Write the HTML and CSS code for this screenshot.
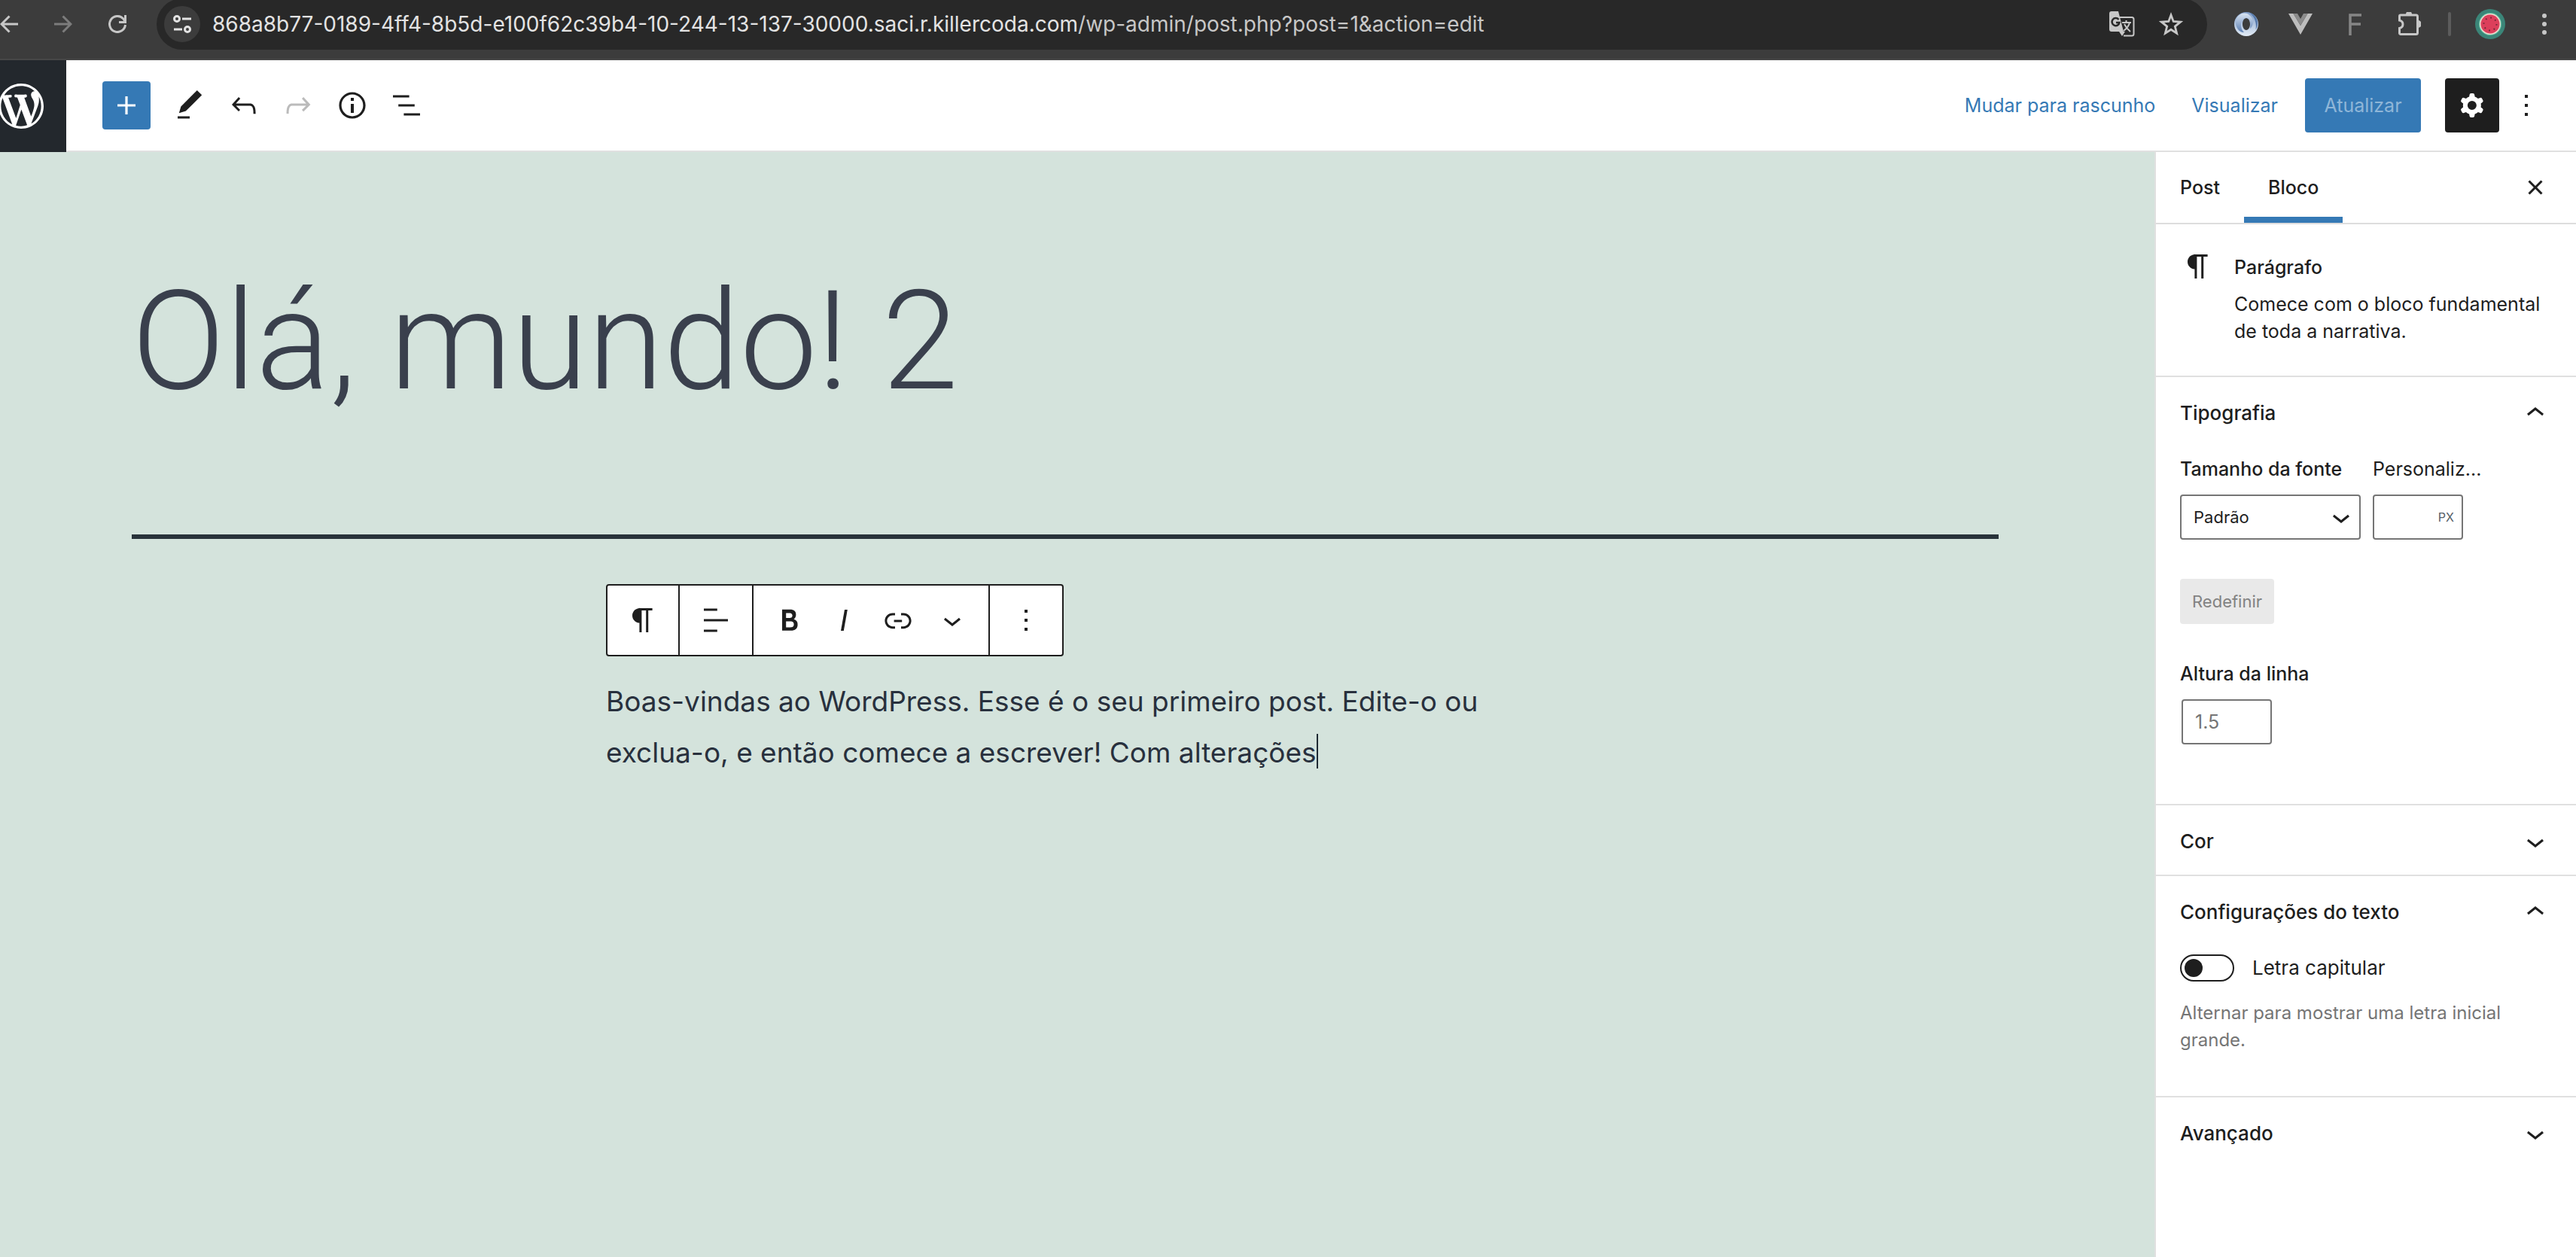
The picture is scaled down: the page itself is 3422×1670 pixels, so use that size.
FILE: index.html
```html
<!DOCTYPE html>
<html lang="pt-BR">
<head>
<meta charset="utf-8">
<title>Editar post</title>
<link rel="stylesheet" href="styles.css">
</head>
<body>
<header class="browser">
  <nav class="browser-nav" aria-label="Navegador">
    <button class="plain" aria-label="Voltar"><svg width="24" height="24" viewBox="0 0 24 24"><path d="M24 12H2M12.500 1.500 2 12l10.500 10.500" fill="none" stroke="#c7c7c7" stroke-width="3"/></svg></button>
    <button class="plain" aria-label="Avançar"><svg width="24" height="24" viewBox="0 0 24 24"><path d="M0 12h22M11.500 1.500 22 12 11.500 22.500" fill="none" stroke="#7c7c7c" stroke-width="3"/></svg></button>
    <button class="plain" aria-label="Recarregar"><svg width="24" height="24" viewBox="0 0 24 24"><path d="M22.500 13A10.500 10.500 0 1 1 19.600 4.700L22 8" fill="none" stroke="#c7c7c7" stroke-width="3"/><path d="M24 0v11H14V8h7V0z" fill="#c7c7c7"/></svg></button>
  </nav>
  <div class="address">
    <button class="plain site-info" aria-label="Informações do site"><svg width="24" height="24" viewBox="0 0 24 24" fill="none" stroke="#e3e3e3" stroke-width="3"><circle cx="5" cy="5" r="3.500"/><path d="M12 5h12M1 19h11"/><circle cx="19" cy="19" r="3.500"/></svg></button>
    <span class="url"><span class="url-host">868a8b77-0189-4ff4-8b5d-e100f62c39b4-10-244-13-137-30000.saci.r.killercoda.com</span>/wp-admin/post.php?post=1&amp;action=edit</span>
    <button class="plain" aria-label="Traduzir"><svg width="34" height="34" viewBox="0 0 34 34"><path d="M14 8h16a2.500 2.500 0 0 1 2.500 2.500V30a2.500 2.500 0 0 1-2.500 2.500H19" fill="none" stroke="#c7c7c7" stroke-width="2"/><path d="M3 0h9l7 27H3a3 3 0 0 1-3-3V3a3 3 0 0 1 3-3zM13 27h8l-4 6z" fill="#c7c7c7"/><path d="M12.500 11A5 5 0 1 0 13.500 15H9" fill="none" stroke="#282828" stroke-width="2.500"/><path d="M17 15h12M22.500 12v3M27 15c-1 5-4 8-8 11M20 17c2 4 4 7 8 10" fill="none" stroke="#c7c7c7" stroke-width="2"/></svg></button>
    <button class="plain" aria-label="Favoritar"><svg width="32" height="32" viewBox="0 0 32 32"><path d="M16 4l3.200 8.500 9.300.7-7.200 5.900 2.300 9L16 23.200l-7.600 4.900 2.300-9L3.500 13.200l9.300-.7z" fill="none" stroke="#c7c7c7" stroke-width="2.800"/></svg></button>
  </div>
  <div class="extensions">
    <button class="plain" aria-label="Extensão O"><svg width="32" height="32" viewBox="0 0 32 32"><defs><linearGradient id="ring" x1="0" y1="0" x2="0" y2="1"><stop offset="0" stop-color="#d9e4f2"/><stop offset="1" stop-color="#5c80b4"/></linearGradient><linearGradient id="ring-low" x1="0" y1="0" x2="0" y2="1"><stop offset="0" stop-color="#7f9dc8"/><stop offset="1" stop-color="#e3ecf6"/></linearGradient></defs><path fill-rule="evenodd" fill="url(#ring-low)" d="M16 0a16 16 0 1 0 0 32 16 16 0 1 0 0-32zM16 8c3 0 5 4 5 8s-2 8-5 8-5-4-5-8 2-8 5-8z"/><path fill="url(#ring)" d="M2 11C5 2 14-1 20 4c6 4 7 13 1 18 1-8 0-14-5-14-4 0-7 4-7 9 0 4 1 7 4 10C5 27 1 18 2 11z"/><path fill="#5578aa" d="M20 0.500c10 3 14 14 8.500 23C30 14 27 6 20 .5z"/></svg></button>
    <button class="plain" aria-label="Extensão V"><svg width="32" height="32" viewBox="0 0 32 32"><path d="M0 2h6.500L16 18l9.500-16H32L16 30z" fill="#bdbdbd"/><path d="M6.500 2H12l4 7 4-7h5.500L16 18z" fill="#8b8b8b"/></svg></button>
    <button class="plain" aria-label="Extensão F"><svg width="32" height="32" viewBox="0 0 32 32"><path d="M10 31V4h15M10 16h14" fill="none" stroke="#858585" stroke-width="3.500"/></svg></button>
    <button class="plain" aria-label="Extensões"><svg width="32" height="32" viewBox="0 0 32 32"><path d="M5 4h20.500a2 2 0 0 1 2 2v21.500a2 2 0 0 1-2 2H5a1.500 1.500 0 0 1-1.500-1.500v-6.500c6-1.500 6-9 0-10.500V5.500A1.500 1.500 0 0 1 5 4z" fill="none" stroke="#c7c7c7" stroke-width="3"/><path d="M12 3a4 4 0 0 1 8 0zM28 11a4.500 4.500 0 0 1 0 10z" fill="#c7c7c7"/></svg></button>
  </div>
  <span class="separator"></span>
  <button class="plain" aria-label="Perfil"><svg width="40" height="40" viewBox="0 0 40 40"><circle cx="20" cy="20" r="20" fill="#3b8578"/><circle cx="20" cy="20" r="15" fill="#5fc5a4"/><circle cx="20" cy="20" r="14" fill="#f1d6cc"/><circle cx="20" cy="20" r="12.500" fill="#dc3f5b"/><circle cx="20" cy="20" r="8.500" fill="none" stroke="#6e2836" stroke-width="2" stroke-dasharray="1.700 4.976"/></svg></button>
  <button class="plain browser-menu" aria-label="Menu"><svg width="32" height="32" viewBox="0 0 32 32" fill="#c7c7c7"><circle cx="16" cy="5" r="3"/><circle cx="16" cy="16" r="3"/><circle cx="16" cy="27" r="3"/></svg></button>
</header>

<header class="editor-header">
  <a class="wp-home" href="#" aria-label="Ver posts"><svg class="wp-logo" viewBox="0 0 20 20"><path fill="#fff" d="M20 10c0-5.510-4.490-10-10-10C4.480 0 0 4.490 0 10c0 5.520 4.480 10 10 10 5.510 0 10-4.480 10-10zM7.780 15.370L4.370 6.220c.55-.02 1.170-.08 1.170-.08.5-.06.44-1.130-.06-1.110 0 0-1.450.11-2.370.11-.18 0-.37 0-.58-.01C4.120 2.690 6.870 1.110 10 1.110c2.330 0 4.450.87 6.050 2.340-.68-.11-1.650.39-1.650 1.580 0 .74.45 1.360.9 2.100.35.61.55 1.360.55 2.460 0 1.490-1.400 5-1.400 5l-3.030-8.370c.54-.02.82-.17.82-.17.5-.05.44-1.250-.06-1.220 0 0-1.440.12-2.380.12-.87 0-2.330-.12-2.330-.12-.5-.03-.56 1.200-.06 1.220l.92.080 1.260 3.410zM17.410 10c.24-.64.74-1.870.43-4.250.7 1.290 1.050 2.710 1.050 4.250 0 3.290-1.730 6.240-4.400 7.780.97-2.590 1.940-5.200 2.920-7.780zM6.100 18.090C3.120 16.650 1.110 13.530 1.110 10c0-1.300.23-2.480.72-3.590C3.250 10.300 4.670 14.200 6.100 18.090zm4.030-6.630l2.580 6.980c-.86.29-1.760.45-2.710.45-.79 0-1.570-.11-2.290-.33.81-2.380 1.620-4.740 2.420-7.100z"/></svg></a>
  <div class="tools">
    <button class="tool-add" aria-label="Adicionar bloco"><svg class="icon" viewBox="0 0 24 24"><path d="M18 11.200h-5.200V6h-1.600v5.200H6v1.600h5.200V18h1.600v-5.200H18z"/></svg></button>
    <button class="tool" aria-label="Ferramentas"><svg class="icon" viewBox="0 0 24 24"><path d="M20.100 5.100L16.900 2 6.200 12.700l-1.300 4.400 4.500-1.300L20.100 5.100zM4 20.800h8v-1.500H4v1.500z"/></svg></button>
    <button class="tool" aria-label="Desfazer"><svg class="icon" viewBox="0 0 24 24"><path d="M18.300 11.700c-.6-.6-1.400-.9-2.300-.9H6.700l2.900-3.300-1.100-1-4.500 5L8.500 16l1-1-2.700-2.700H16c.5 0 .9.200 1.300.5 1 1 1 3.400 1 4.500v.3h1.500v-.2c0-1.500 0-4.300-1.500-5.700z"/></svg></button>
    <button class="tool" aria-label="Refazer" disabled><svg class="icon" viewBox="0 0 24 24"><path d="M15.600 6.500l-1.100 1 2.900 3.300H8c-.9 0-1.700.3-2.300.9-1.400 1.500-1.400 4.200-1.400 5.600v.2h1.500v-.3c0-1.100 0-3.500 1-4.500.3-.3.7-.5 1.300-.5h9.200L14.500 15l1.100 1.100 4.600-4.600-4.600-5z"/></svg></button>
    <button class="tool" aria-label="Detalhes"><svg class="icon" viewBox="0 0 24 24"><path d="M12 3.200c-4.800 0-8.800 3.900-8.800 8.800 0 4.800 3.900 8.800 8.800 8.800 4.800 0 8.800-3.900 8.800-8.800 0-4.800-4-8.800-8.800-8.800zm0 16c-4 0-7.200-3.300-7.200-7.200C4.800 8 8 4.800 12 4.800s7.200 3.300 7.200 7.200c0 4-3.200 7.200-7.200 7.200zM11 17h2v-6h-2v6zm0-8h2V7h-2v2z"/></svg></button>
    <button class="tool" aria-label="Visualização em lista"><svg class="icon" viewBox="0 0 24 24"><path d="M13.800 5.200H3v1.500h10.800V5.200zm-3.600 12v1.500H21v-1.500H10.200zm7.200-6H6.600v1.500h10.800v-1.500z"/></svg></button>
  </div>
  <div class="actions">
    <button class="link-action">Mudar para rascunho</button>
    <button class="link-action">Visualizar</button>
    <button class="update" disabled>Atualizar</button>
    <button class="settings" aria-label="Configurações"><svg class="icon" viewBox="0 0 24 24"><path fill-rule="evenodd" d="M10.289 4.836A1 1 0 0111.275 4h1.306a1 1 0 01.987.836l.244 1.466c.787.260 1.503.679 2.108 1.218l1.393-.522a1 1 0 011.216.437l.653 1.130a1 1 0 01-.230 1.273l-1.148.944a6.025 6.025 0 010 2.435l1.149.946a1 1 0 01.230 1.272l-.653 1.130a1 1 0 01-1.216.437l-1.394-.522c-.605.540-1.320.958-2.108 1.218l-.244 1.466a1 1 0 01-.987.836h-1.306a1 1 0 01-.986-.836l-.244-1.466a5.995 5.995 0 01-2.108-1.218l-1.394.522a1 1 0 01-1.217-.436l-.653-1.131a1 1 0 01.230-1.272l1.149-.946a6.026 6.026 0 010-2.435l-1.148-.944a1 1 0 01-.230-1.272l.653-1.131a1 1 0 011.217-.437l1.393.522a5.994 5.994 0 012.108-1.218l.244-1.466zM14.929 12a3 3 0 11-6 0 3 3 0 016 0z"/></svg></button>
    <button class="tool" aria-label="Opções"><svg class="icon" viewBox="0 0 24 24"><path d="M13 19h-2v-2h2v2zm0-6h-2v-2h2v2zm0-6h-2V5h2v2z"/></svg></button>
  </div>
</header>

<div class="workspace">
  <main class="canvas">
    <h1 class="post-title">Olá, mundo! 2</h1>
    <div class="post-body">
      <div class="block-toolbar" role="toolbar" aria-label="Ferramentas do bloco">
        <div class="group"><button class="tool" aria-label="Parágrafo"><svg class="icon" viewBox="0 0 24 24"><path d="M18.300 4H9.900v-.1l-.9.2c-2.300.4-4 2.400-4 4.800s1.700 4.400 4 4.800l.7.100V20h1.500V5.500h2.900V20h1.500V5.500h2.700V4z"/></svg></button></div>
        <div class="group"><button class="tool" aria-label="Alinhar"><svg class="icon" viewBox="0 0 24 24"><path d="M4 19.800h8.900v-1.500H4v1.500zm8.900-15.600H4v1.500h8.900V4.200zm-8.900 7v1.500h16v-1.500H4z"/></svg></button></div>
        <div class="group">
          <button class="tool" aria-label="Negrito"><svg class="icon" viewBox="0 0 24 24"><path d="M14.700 11.300c1-.6 1.500-1.600 1.500-3 0-2.300-1.300-3.400-4-3.400H7v14h5.800c1.400 0 2.500-.3 3.300-1 .8-.7 1.200-1.700 1.200-2.900.1-1.900-.8-3.100-2.600-3.700zm-5.100-4h2.300c.6 0 1.100.1 1.400.4.300.3.500.7.500 1.200s-.2 1-.5 1.200c-.3.3-.8.400-1.400.4H9.600V7.300zm4.600 9c-.4.300-1 .4-1.700.4H9.600v-3.900h2.900c.7 0 1.300.2 1.700.5.400.3.600.8.600 1.500s-.2 1.200-.6 1.500z"/></svg></button>
          <button class="tool" aria-label="Itálico"><svg class="icon" viewBox="0 0 24 24"><path d="M12.500 5L10 19h1.900l2.500-14z"/></svg></button>
          <button class="tool" aria-label="Link"><svg class="icon" viewBox="0 0 24 24"><path d="M15.600 7.200H14v1.500h1.600c2 0 3.700 1.700 3.700 3.700s-1.700 3.700-3.700 3.700H14v1.500h1.600c2.800 0 5.200-2.300 5.200-5.200 0-2.900-2.300-5.200-5.200-5.200zM4.700 12.400c0-2 1.700-3.700 3.700-3.700H10V7.200H8.400c-2.900 0-5.200 2.300-5.200 5.200 0 2.900 2.300 5.200 5.200 5.200H10v-1.500H8.400c-2 0-3.700-1.700-3.700-3.700zm4.600.9h5.300v-1.500H9.300v1.500z"/></svg></button>
          <button class="tool" aria-label="Mais"><svg class="icon" viewBox="0 0 24 24"><path d="M17.500 11.600L12 16l-5.500-4.400.9-1.200L12 14l4.500-3.600 1 1.200z"/></svg></button>
        </div>
        <div class="group"><button class="tool" aria-label="Opções do bloco"><svg class="icon" viewBox="0 0 24 24"><path d="M13 19h-2v-2h2v2zm0-6h-2v-2h2v2zm0-6h-2V5h2v2z"/></svg></button></div>
      </div>
      <p class="paragraph">Boas-vindas ao WordPress. Esse é o seu primeiro post. Edite-o ou exclua-o, e então comece a escrever! Com alterações<span class="caret"></span></p>
    </div>
  </main>

  <aside class="sidebar">
    <div class="tabs">
      <button class="tab">Post</button>
      <button class="tab tab-active">Bloco</button>
      <button class="plain close" aria-label="Fechar"><svg class="icon" viewBox="0 0 24 24"><path d="M12 13.060l3.712 3.713 1.061-1.060L13.061 12l3.712-3.712-1.060-1.060L12 10.938 8.288 7.227l-1.061 1.060L10.939 12l-3.712 3.712 1.060 1.061L12 13.061z"/></svg></button>
    </div>
    <section class="card">
      <svg class="icon" viewBox="0 0 24 24"><path d="M18.300 4H9.900v-.1l-.9.2c-2.300.4-4 2.400-4 4.800s1.700 4.400 4 4.800l.7.100V20h1.500V5.500h2.900V20h1.500V5.500h2.700V4z"/></svg>
      <div class="card-text">
        <h2 class="card-title">Parágrafo</h2>
        <p class="card-desc">Comece com o bloco fundamental de toda a narrativa.</p>
      </div>
    </section>
    <section class="panel">
      <button class="panel-toggle">Tipografia<svg class="icon" viewBox="0 0 24 24"><path d="M6.500 12.400L12 8l5.500 4.400-.9 1.200L12 10l-4.500 3.600-1-1.200z"/></svg></button>
      <div class="typography">
        <div class="font-row">
          <div class="field">
            <label class="label-strong" for="font-size">Tamanho da fonte</label>
            <div class="select-wrap">
              <select class="select" id="font-size"><option>Padrão</option></select>
              <svg class="icon select-arrow" viewBox="0 0 24 24"><path d="M17.500 11.600L12 16l-5.500-4.400.9-1.200L12 14l4.500-3.600 1 1.200z"/></svg>
            </div>
          </div>
          <div class="field">
            <label for="custom-size">Personaliz...</label>
            <div class="unit-box"><input class="unit-input" id="custom-size" type="text"><span class="unit">PX</span></div>
          </div>
        </div>
        <button class="reset" disabled>Redefinir</button>
        <div class="field">
          <label class="label-strong" for="line-height">Altura da linha</label>
          <input class="line-input" id="line-height" type="text" placeholder="1.5">
        </div>
      </div>
    </section>
    <section class="panel">
      <button class="panel-toggle">Cor<svg class="icon" viewBox="0 0 24 24"><path d="M17.500 11.600L12 16l-5.500-4.400.9-1.200L12 14l4.500-3.600 1 1.200z"/></svg></button>
    </section>
    <section class="panel">
      <button class="panel-toggle">Configurações do texto<svg class="icon" viewBox="0 0 24 24"><path d="M6.500 12.400L12 8l5.500 4.400-.9 1.200L12 10l-4.500 3.600-1-1.200z"/></svg></button>
      <div class="text-settings">
        <div class="switch-row"><input class="switch" id="drop-cap" type="checkbox"><label class="switch-label" for="drop-cap">Letra capitular</label></div>
        <p class="help">Alternar para mostrar uma letra inicial grande.</p>
      </div>
    </section>
    <section class="panel">
      <button class="panel-toggle">Avançado<svg class="icon" viewBox="0 0 24 24"><path d="M17.500 11.600L12 16l-5.500-4.400.9-1.200L12 14l4.500-3.600 1 1.200z"/></svg></button>
    </section>
  </aside>
</div>
</body>
</html>
```
FILE: styles.css
```css
* { box-sizing: border-box; }

body {
  margin: 0;
  min-height: 100vh;
  display: flex;
  flex-direction: column;
  background: #fff;
  color: #1e1e1e;
  font: 400 25px/36px Inter, "Liberation Sans", sans-serif;
}

button, input, select { font: inherit; color: inherit; }

button {
  display: flex;
  align-items: center;
  justify-content: center;
  padding: 0;
  border: 0;
  background: none;
}

h1, h2, p { margin: 0; }
svg { display: block; flex: none; }

.icon { width: 48px; height: 48px; fill: currentColor; }
.plain { flex: none; }

/* Browser bar */
.browser {
  display: flex;
  align-items: center;
  height: 80px;
  padding: 0 26px 14px 0;
  border-bottom: 2px solid #474747;
  background: #3c3c3c;
}
.browser-nav { display: flex; gap: 48px; margin-right: 40px; }
.address {
  display: flex;
  flex: 1;
  align-items: center;
  gap: 32px;
  height: 68px;
  min-width: 0;
  padding: 0 32px 0 10px;
  border-radius: 34px;
  background: #282828;
}
.site-info { width: 48px; height: 48px; border-radius: 50%; background: #3c3c3c; }
.url { flex: 1; margin-left: -16px; color: #c7c7c7; font-size: 28px; white-space: nowrap; }
.url-host { color: #e3e3e3; }
.extensions { display: flex; gap: 40px; margin-left: 36px; }
.separator { width: 4px; height: 32px; margin: 0 32px 0 36px; border-radius: 2px; background: #5c5c5c; }
.browser-menu { margin-left: 36px; }

/* Editor header */
.editor-header {
  display: flex;
  align-items: center;
  height: 122px;
  border-bottom: 2px solid #e0e0e0;
}
.wp-home {
  display: flex;
  align-items: center;
  justify-content: center;
  align-self: stretch;
  width: 88px;
  margin-bottom: -2px;
  padding-right: 32px;
  background: #23282d;
  overflow: hidden;
}
.wp-logo { width: 60px; height: 60px; }
.tools { display: flex; align-items: center; margin-left: 48px; }
.tool { width: 72px; height: 72px; }
.tool:disabled { color: #bbb; }
.tool-add { width: 64px; height: 64px; margin-right: 16px; border-radius: 4px; background: #3579b5; color: #fff; }
.actions { display: flex; align-items: center; margin-left: auto; padding-right: 30px; }
.link-action { height: 72px; margin-right: 48px; color: #3579b5; }
.update { height: 72px; width: 154px; margin: 0 32px 0 -12px; border-radius: 4px; background: #3579b5; color: #8fb6d8; }
.settings { width: 72px; height: 72px; border-radius: 4px; background: #1e1e1e; color: #fff; }

/* Workspace */
.workspace { display: flex; flex: 1; }
.canvas {
  flex: 1;
  min-width: 0;
  padding: 146px 32px 140px 0;
  background: #d4e3dc;
}
.post-title {
  max-width: 2480px;
  margin: 0 auto;
  padding-bottom: 150px;
  border-bottom: 6px solid #28333a;
  color: #3a404d;
  font-family: Roboto, Inter, sans-serif;
  font-size: 183px;
  font-weight: 300;
  line-height: 212px;
}
.post-body { max-width: 1220px; margin: 60px auto 0; }
.block-toolbar {
  display: flex;
  width: fit-content;
  height: 96px;
  border: 2px solid #1e1e1e;
  border-radius: 4px;
  background: #fff;
}
.group { display: flex; align-items: center; padding: 0 12px; }
.group:first-child { padding: 0 11px; }
.group + .group { border-left: 2px solid #1e1e1e; }
.paragraph { margin-top: 26px; color: #28303d; font-size: 37px; line-height: 68px; }
.caret { display: inline-block; width: 2px; height: 46px; background: #1e2a33; vertical-align: -8px; }

/* Sidebar */
.sidebar { width: 560px; flex: none; border-left: 2px solid #e0e0e0; background: #fff; }
.tabs { display: flex; height: 96px; border-bottom: 2px solid #ddd; font-weight: 500; }
.tab { padding: 0 32px; }
.tab-active { box-shadow: inset 0 -8px #3579b5; }
.close { margin: 0 30px 0 auto; }
.card { display: flex; gap: 24px; padding: 32px 32px 41px; }
.card-title { margin-top: 7px; font-size: 25px; font-weight: 500; line-height: 36px; }
.card-desc { margin-top: 13px; }
.panel { border-top: 2px solid #e0e0e0; }
.panel-toggle { width: 100%; height: 92px; justify-content: space-between; padding: 4px 30px 0 32px; font-size: 26px; font-weight: 500; }
.typography { padding: 12px 32px 79px; }
.font-row { display: flex; gap: 16px; }
.field { display: flex; flex-direction: column; align-items: flex-start; }
.label-strong { font-weight: 500; }
.select-wrap { display: grid; align-items: center; margin-top: 16px; }
.select-wrap > * { grid-area: 1 / 1; }
.select {
  appearance: none;
  width: 240px;
  height: 60px;
  padding: 0 16px;
  border: 2px solid #757575;
  border-radius: 4px;
  background: #fff;
  font-size: 22px;
}
.select-arrow { justify-self: end; margin-right: 2px; pointer-events: none; }
.unit-box {
  display: flex;
  align-items: center;
  width: 120px;
  height: 60px;
  margin-top: 16px;
  padding-right: 10px;
  border: 2px solid #757575;
  border-radius: 4px;
}
.unit-input { flex: 1; min-width: 0; border: 0; outline: 0; background: none; }
.unit { color: #555d66; font-size: 16px; }
.reset { height: 60px; margin: 52px 0 48px; padding: 0 16px; border-radius: 4px; background: #e9e9e9; color: #828282; font-size: 22px; }
.line-input {
  width: 120px;
  height: 60px;
  margin: 16px 0 0 2px;
  padding: 0 16px;
  border: 2px solid #757575;
  border-radius: 4px;
}
.line-input::placeholder { color: #757575; opacity: 1; }
.text-settings { padding: 12px 32px 56px; }
.switch-row { display: flex; align-items: center; gap: 24px; }
.switch {
  appearance: none;
  display: flex;
  align-items: center;
  width: 72px;
  height: 36px;
  margin: 0;
  padding: 0 4px;
  border: 2px solid #1e1e1e;
  border-radius: 18px;
}
.switch::before { content: ""; width: 24px; height: 24px; border-radius: 50%; background: #1e1e1e; }
.switch-label { font-size: 26px; }
.help { margin-top: 24px; color: #757575; font-size: 24px; }
```
